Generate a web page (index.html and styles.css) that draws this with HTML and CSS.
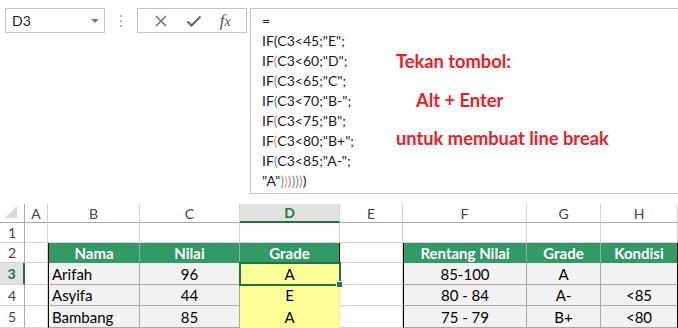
FILE: index.html
```html
<html>
<head>
<title>Rumus IF bertingkat</title>
<link rel="stylesheet" href="styles.css">
</head>
<body>

<div class="toolbar">
  <div class="tools">
    <div class="namebox"><span>D3</span><span class="caret"></span></div>
    <div class="dots"><i></i><i></i><i></i></div>
    <div class="buttons">
      <svg width="12" height="12" viewBox="0 0 12 12"><path d="M1 1L11 11M11 1L1 11" stroke="#767676" stroke-width="1.6" fill="none"/></svg>
      <svg width="16" height="12" viewBox="0 0 16 12"><path d="M1.5 6.5L5.5 10.5L14.5 1.5" stroke="#6a6a6a" stroke-width="2.2" fill="none"/></svg>
      <span class="fx">f<small>x</small></span>
    </div>
  </div>
  <div class="formula">
    <div class="code">
      <div>=</div>
      <div>IF<span class="p1">(</span>C3&lt;45;"E";</div>
      <div>IF<span class="p2">(</span>C3&lt;60;"D";</div>
      <div>IF<span class="p3">(</span>C3&lt;65;"C";</div>
      <div>IF<span class="p4">(</span>C3&lt;70;"B-";</div>
      <div>IF<span class="p5">(</span>C3&lt;75;"B";</div>
      <div>IF<span class="p6">(</span>C3&lt;80;"B+";</div>
      <div>IF<span class="p7">(</span>C3&lt;85;"A-";</div>
      <div>"A"<span class="p7">)</span><span class="p6">)</span><span class="p5">)</span><span class="p4">)</span><span class="p3">)</span><span class="p2">)</span><span class="p1">)</span></div>
    </div>
    <div class="notes">
      <div>Tekan tombol:</div>
      <div class="indent">Alt + Enter</div>
      <div>untuk membuat line break</div>
    </div>
  </div>
</div>

<div class="sheet">
  <div class="ch corner"><span class="tri"></span></div>
  <div class="ch">A</div>
  <div class="ch">B</div>
  <div class="ch">C</div>
  <div class="ch active">D</div>
  <div class="ch">E</div>
  <div class="ch">F</div>
  <div class="ch">G</div>
  <div class="ch">H</div>

  <div class="rh">1</div>
  <div class="c"></div><div class="c"></div><div class="c"></div><div class="c"></div>
  <div class="c"></div><div class="c"></div><div class="c"></div><div class="c"></div>

  <div class="rh">2</div>
  <div class="c"></div>
  <div class="c th edge-l">Nama</div>
  <div class="c th">Nilai</div>
  <div class="c th edge-r">Grade</div>
  <div class="c"></div>
  <div class="c th edge-l">Rentang Nilai</div>
  <div class="c th">Grade</div>
  <div class="c th edge-r">Kondisi</div>

  <div class="rh active">3</div>
  <div class="c"></div>
  <div class="c td left edge-l">Arifah</div>
  <div class="c td">96</div>
  <div class="c yel sel">A</div>
  <div class="c"></div>
  <div class="c td edge-l">85-100</div>
  <div class="c td">A</div>
  <div class="c td edge-r"></div>

  <div class="rh">4</div>
  <div class="c"></div>
  <div class="c td left edge-l">Asyifa</div>
  <div class="c td">44</div>
  <div class="c yel">E</div>
  <div class="c"></div>
  <div class="c td edge-l">80 - 84</div>
  <div class="c td">A-</div>
  <div class="c td edge-r">&lt;85</div>

  <div class="rh">5</div>
  <div class="c"></div>
  <div class="c td left edge-l">Bambang</div>
  <div class="c td">85</div>
  <div class="c yel">A</div>
  <div class="c"></div>
  <div class="c td edge-l">75 - 79</div>
  <div class="c td">B+</div>
  <div class="c td edge-r">&lt;80</div>
</div>

</body>
</html>
```

FILE: styles.css
```css
body {
  margin: 0;
  background: #fff;
  font-family: Lato, "Liberation Sans", sans-serif;
  color: #000;
}
div.toolbar {
  display: flex;
  padding-top: 8px;
}
div.tools {
  flex: none;
  width: 250px;
  display: flex;
  align-items: flex-start;
}
div.namebox {
  box-sizing: border-box;
  width: 100px;
  height: 25px;
  margin-left: 5px;
  border: 1px solid #c6c6c6;
  display: flex;
  align-items: center;
  justify-content: space-between;
  padding: 0 5px 0 6px;
  font-size: 14px;
  color: #222;
}
span.caret {
  width: 0;
  height: 0;
  border-left: 4px solid transparent;
  border-right: 4px solid transparent;
  border-top: 4px solid #7a7a7a;
}
div.dots {
  width: 32px;
  height: 25px;
  display: flex;
  flex-direction: column;
  align-items: center;
  justify-content: center;
  gap: 3px;
}
div.dots i {
  width: 2px;
  height: 2px;
  background: #bbb;
}
div.buttons {
  box-sizing: border-box;
  width: 110px;
  height: 25px;
  border: 1px solid #c6c6c6;
  display: flex;
  align-items: center;
  justify-content: space-around;
  padding: 0 6px 0 8px;
}
span.fx {
  font-family: "Liberation Serif", serif;
  font-style: italic;
  font-size: 17px;
  line-height: 17px;
  color: #555;
  margin-top: 1px;
}
span.fx small {
  font-size: 14px;
}
div.formula {
  flex: 1;
  box-sizing: border-box;
  height: 186px;
  border-top: 1px solid #c6c6c6;
  border-left: 1px solid #c6c6c6;
  border-bottom: 1px solid #c6c6c6;
  display: flex;
}
div.code {
  width: 134px;
  padding: 2px 0 0 11px;
  font-size: 14px;
  line-height: 20px;
  color: #1a1a1a;
}
span.p1 { color: #1a1a1a; }
span.p2 { color: #ea7b7b; }
span.p3 { color: #a678d6; }
span.p4 { color: #3aa57a; }
span.p5 { color: #e85fb5; }
span.p6 { color: #f0a132; }
span.p7 { color: #4a9fe2; }
div.notes {
  padding-top: 33px;
  font-size: 18.3px;
  font-weight: bold;
  line-height: 38.5px;
  color: #ee1c25;
}
div.indent {
  padding-left: 20px;
}
div.sheet {
  margin-top: 10px;
  display: grid;
  grid-template-columns: 25px 23px 92px 100px 100px 63px 124px 74px 77px;
  grid-template-rows: 19px 20px 20px 22px 21px 22px;
  font-size: 15px;
}
div.sheet > div {
  box-sizing: border-box;
  display: flex;
  align-items: center;
  justify-content: center;
}
div.ch {
  border-right: 1px solid #d4d4d4;
  border-bottom: 1px solid #ababab;
  color: #444;
  font-size: 14px;
}
div.ch.active {
  background: #e1e1e1;
  color: #217346;
  font-weight: bold;
  border-bottom: 2px solid #217346;
}
div.corner {
  justify-content: flex-end;
  align-items: flex-end;
  padding: 0 3px 3px 0;
  border-right-color: #ababab;
}
span.tri {
  width: 0;
  height: 0;
  border-left: 12px solid transparent;
  border-bottom: 12px solid #dadada;
}
div.rh {
  border-right: 1px solid #ababab;
  border-bottom: 1px solid #d4d4d4;
  color: #444;
  font-size: 14px;
}
div.rh.active {
  background: #e1e1e1;
  color: #217346;
  font-weight: bold;
  border-right: 2px solid #217346;
}
div.c {
  border-right: 1px solid #d4d4d4;
  border-bottom: 1px solid #d4d4d4;
}
div.th {
  background: #339966;
  color: #fff;
  font-weight: bold;
  border-right-color: #7dbb9b;
  border-bottom-color: #339966;
}
div.td {
  background: #f2f2f2;
  border-right-color: #a6a6a6;
  border-bottom-color: #a6a6a6;
}
div.td.left {
  justify-content: flex-start;
  padding-left: 3px;
}
div.edge-l {
  border-left: 1px solid #000;
}
div.edge-r {
  border-right: 1px solid #000;
}
div.td.edge-r {
  border-right-color: #000;
}
div.th.edge-r {
  border-right-color: #000;
}
div.yel {
  background: #ffff99;
  border-right-color: #f0f08c;
  border-bottom-color: #ffff99;
}
div.sel {
  position: relative;
  z-index: 2;
  outline: 2px solid #217346;
  outline-offset: -1px;
}
div.sel::after {
  content: "";
  position: absolute;
  right: -4px;
  bottom: -4px;
  width: 5px;
  height: 5px;
  background: #217346;
  border: 1px solid #fff;
}
```
